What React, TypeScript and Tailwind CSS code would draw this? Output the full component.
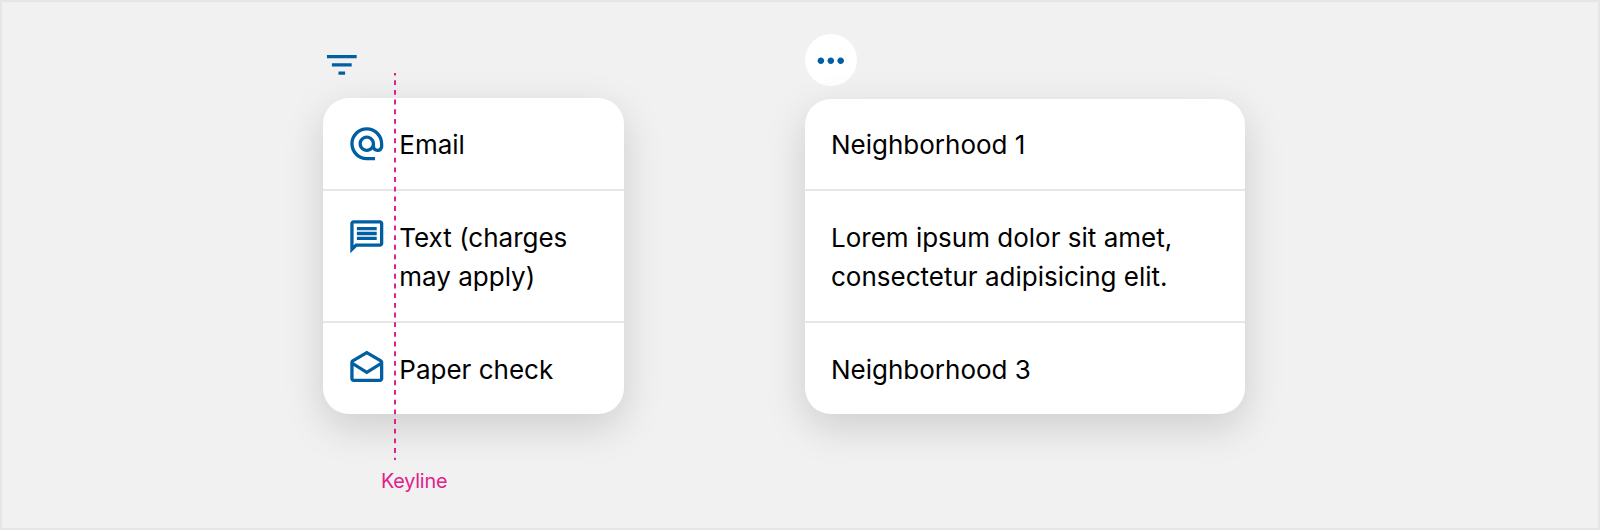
import type { ReactNode } from 'react';

interface IconProps {
  children: ReactNode;
}

interface MenuRow {
  label: ReactNode;
  icon?: ReactNode;
}

interface MenuCardProps {
  rows: MenuRow[];
  className: string;
}

function Icon({ children }: IconProps) {
  return (
    <svg viewBox="0 0 24 24" fill="currentColor" className="h-[39.6px] w-[39.6px] shrink-0 text-[#005ea2]">
      {children}
    </svg>
  );
}

const filterIcon = (
  <Icon>
    <path d="M10 18h4v-2h-4v2zM3 6v2h18V6H3zm3 7h12v-2H6v2z" />
  </Icon>
);

const moreIcon = (
  <Icon>
    <path d="M6 10c-1.1 0-2 .9-2 2s.9 2 2 2 2-.9 2-2-.9-2-2-2zm12 0c-1.1 0-2 .9-2 2s.9 2 2 2 2-.9 2-2-.9-2-2-2zm-6 0c-1.1 0-2 .9-2 2s.9 2 2 2 2-.9 2-2-.9-2-2-2z" />
  </Icon>
);

const emailIcon = (
  <Icon>
    <path d="M12 2C6.48 2 2 6.48 2 12s4.48 10 10 10h5v-2h-5c-4.34 0-8-3.66-8-8s3.66-8 8-8 8 3.66 8 8v1.43c0 .79-.71 1.57-1.5 1.57s-1.5-.78-1.5-1.57V12c0-2.76-2.24-5-5-5s-5 2.24-5 5 2.24 5 5 5c1.38 0 2.64-.56 3.54-1.47.65.89 1.77 1.47 2.96 1.47 1.97 0 3.5-1.6 3.5-3.57V12c0-5.52-4.48-10-10-10zm0 13c-1.66 0-3-1.34-3-3s1.34-3 3-3 3 1.34 3 3-1.34 3-3 3z" />
  </Icon>
);

const messageIcon = (
  <Icon>
    <path d="M20 2H4c-1.1 0-2 .9-2 2v18l4-4h14c1.1 0 2-.9 2-2V4c0-1.1-.9-2-2-2zm0 14H5.17L4 17.17V4h16v12zM6 12h12v2H6zm0-3h12v2H6zm0-3h12v2H6z" />
  </Icon>
);

const draftsIcon = (
  <Icon>
    <path d="M21.99 8c0-.72-.37-1.35-.94-1.7L12 1 2.95 6.3C2.38 6.65 2 7.28 2 8v10c0 1.1.9 2 2 2h16c1.1 0 2-.9 2-2l-.01-10zm-2 0v.01L12 13 4 8l8-4.68L19.99 8zM4 18v-7.66l8 5.02 7.99-4.99L20 18H4z" />
  </Icon>
);

const contactRows: MenuRow[] = [
  { icon: emailIcon, label: 'Email' },
  { icon: messageIcon, label: <>Text (charges<br />may apply)</> },
  { icon: draftsIcon, label: 'Paper check' },
];

const neighborhoodRows: MenuRow[] = [
  { label: 'Neighborhood 1' },
  { label: <>Lorem ipsum dolor sit amet,<br />consectetur adipisicing elit.</> },
  { label: 'Neighborhood 3' },
];

function MenuCard({ rows, className }: MenuCardProps) {
  return (
    <ul
      className={`${className} divide-y-2 divide-[#e6e6e6] rounded-[26px] bg-white shadow-[0_13px_40px_rgba(0,0,0,0.15)]`}
    >
      {rows.map((row, i) => (
        <li key={i} className="flex items-start gap-[12.8px] px-[26px] pt-[27px] pb-[24.4px] last:pb-[25px]">
          {row.icon && <div className="-ml-[1.6px] -mt-[1.1px]">{row.icon}</div>}
          <span className="text-[26px] leading-[39.3px] text-black">{row.label}</span>
        </li>
      ))}
    </ul>
  );
}

// Dashed guide that marks where the labels start
function Keyline() {
  return (
    <svg width="2" height="387" className="absolute left-[71px] top-[73px]">
      <line x1="1" y1="0" x2="1" y2="387" stroke="#e0218a" strokeWidth="2" strokeDasharray="4.84 4.84" strokeDashoffset="2.42" />
    </svg>
  );
}

export default function App() {
  return (
    <main className="flex h-[530px] w-[1600px] border-2 border-[#e6e6e6] bg-[#f1f1f1] pl-[320.5px] font-['Inter','Liberation_Sans',sans-serif]">
      <section className="relative -mt-0.5 flex w-[301.5px] flex-col">
        <Keyline />
        <button className="-ml-[0.1px] mt-[45.3px] flex h-[52.7px] w-[39.6px] items-start">{filterIcon}</button>
        <MenuCard rows={contactRows} className="w-full [&>li:first-child]:pt-[27px]" />
        <p className="mt-[51.7px] ml-[58.5px] text-[19.8px] leading-[30px] tracking-[-0.2px] text-[#e0218a]">Keyline</p>
      </section>

      <section className="-mt-0.5 ml-[181px] flex w-[440px] flex-col">
        <button className="mt-[34.3px] mb-[12.7px] flex h-[52px] w-[52px] items-center justify-center rounded-full bg-white">
          {moreIcon}
        </button>
        <MenuCard rows={neighborhoodRows} className="w-full [&>li:first-child]:pt-[26px]" />
      </section>
    </main>
  );
}
